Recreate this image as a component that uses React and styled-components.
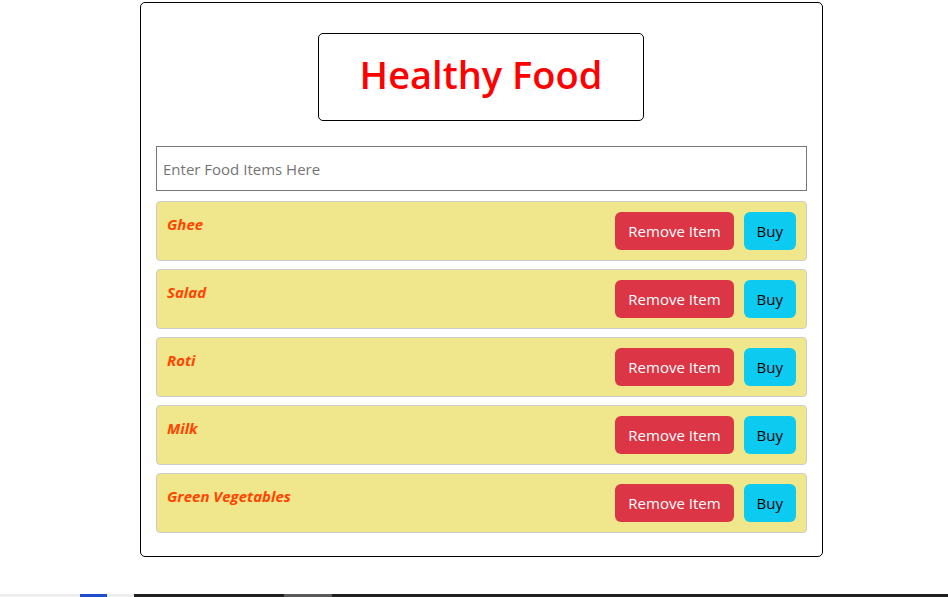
import styled, { createGlobalStyle } from "styled-components";

const GlobalStyle = createGlobalStyle`
  * { box-sizing: border-box; }
  body {
    margin: 0;
    font-family: "Open Sans", "Noto Sans", sans-serif;
    background: #fff;
  }
`;

const Page = styled.div`
  min-height: 100vh;
  display: flex;
  flex-direction: column;
`;

const Card = styled.div`
  width: 683px;
  margin: 2px 0 0 140px;
  padding: 30px 15px 23px;
  border: 1px solid #000;
  border-radius: 5px;
`;

const TitleBox = styled.div`
  width: 326px;
  height: 88px;
  margin: 0 0 25px 162px;
  padding-bottom: 6px;
  border: 1px solid #000;
  border-radius: 5px;
  display: flex;
  align-items: center;
  justify-content: center;
`;

const Title = styled.h1`
  margin: 0;
  color: #ff0000;
  font-size: 38px;
  font-weight: 600;
`;

const Input = styled.input`
  display: block;
  width: 100%;
  height: 45px;
  padding: 0 6px;
  border: 1px solid #767676;
  font-family: inherit;
  font-size: 15px;
  color: #333;
  outline: none;
  margin-bottom: 10px;
  &::placeholder {
    color: #757575;
  }
`;

const List = styled.ul`
  list-style: none;
  margin: 0;
  padding: 0;
  display: flex;
  flex-direction: column;
  gap: 8px;
`;

const Item = styled.li`
  display: flex;
  justify-content: space-between;
  align-items: flex-start;
  padding: 10px;
  background: #f0e68c;
  border: 1px solid #ccc;
  border-radius: 4px;
`;

const Name = styled.span`
  color: #ff4500;
  font-style: italic;
  font-weight: 700;
  font-size: 15px;
  line-height: 24px;
`;

const Actions = styled.div`
  display: flex;
  gap: 10px;
`;

const Button = styled.button`
  height: 38px;
  padding: 0 12px;
  border: 1px solid transparent;
  border-radius: 6px;
  font-family: inherit;
  font-size: 15px;
  cursor: pointer;
  background: ${(p) => (p.$variant === "danger" ? "#dc3545" : "#0dcaf0")};
  color: ${(p) => (p.$variant === "danger" ? "#fff" : "#000")};
`;

const Taskbar = styled.div`
  margin-top: auto;
  height: 3px;
  display: flex;
`;

const TaskSeg = styled.div`
  width: ${(p) => p.$w};
  flex: ${(p) => (p.$grow ? 1 : "none")};
  background: ${(p) => p.$bg};
`;

const foods = ["Ghee", "Salad", "Roti", "Milk", "Green Vegetables"];

const App = () => {
  return (
    <Page>
      <GlobalStyle />
      <Card>
        <TitleBox>
          <Title>Healthy Food</Title>
        </TitleBox>
        <Input placeholder="Enter Food Items Here" />
        <List>
          {foods.map((f) => (
            <Item key={f}>
              <Name>{f}</Name>
              <Actions>
                <Button $variant="danger">Remove Item</Button>
                <Button $variant="info">Buy</Button>
              </Actions>
            </Item>
          ))}
        </List>
      </Card>
      <Taskbar>
        <TaskSeg $w="80px" $bg="#eeeeee" />
        <TaskSeg $w="27px" $bg="#1f4fc8" />
        <TaskSeg $w="27px" $bg="#eeeeee" />
        <TaskSeg $w="150px" $bg="#202020" />
        <TaskSeg $w="48px" $bg="#5a5a5a" />
        <TaskSeg $grow $bg="#202020" />
      </Taskbar>
    </Page>
  );
};

export default App;
